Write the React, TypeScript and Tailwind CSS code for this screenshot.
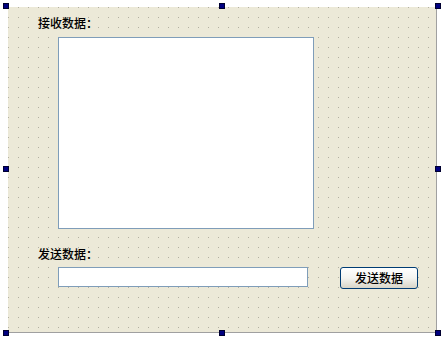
import React from 'react';

// selection handles around the form in the designer
const handles = [
  'left-[3px] top-[3px]',
  'left-[219px] top-[3px]',
  'left-[435px] top-[3px]',
  'left-[3px] top-[166px]',
  'left-[435px] top-[166px]',
  'left-[3px] top-[330px]',
  'left-[219px] top-[330px]',
  'left-[435px] top-[330px]',
];

// designer grid: one pixel dot every 10px
const DotGrid = () => (
  <svg className="absolute inset-0 w-full h-full" aria-hidden="true">
    <defs>
      <pattern id="grid" width="10" height="10" patternUnits="userSpaceOnUse">
        <rect x="0" y="0" width="1" height="1" fill="#b3b0a2" />
      </pattern>
    </defs>
    <rect width="100%" height="100%" fill="url(#grid)" />
  </svg>
);

export default function App() {
  return (
    <div className="relative w-[443px] h-[340px] bg-white overflow-hidden font-['Noto_Sans_CJK_SC','Noto_Sans',sans-serif] text-[12px] text-black">
      <div className="absolute left-[8px] top-[7px] w-[429px] h-[326px] pl-[30px] pt-[9px] border-r border-b border-[#a0a0a0] bg-[#ece9d8]">
        <DotGrid />
        <div className="relative">
          <div className="h-[14px] leading-[14px] font-medium">接收数据：</div>
          <div className="ml-[20px] mt-[7px] w-[256px] h-[192px] bg-white border border-[#7f9db9]" />
          <div className="mt-[18px] h-[14px] leading-[14px] font-medium">发送数据：</div>
          <div className="mt-[6px] flex items-start">
            <div className="ml-[20px] w-[250px] h-[20px] bg-white border border-[#7f9db9]" />
            <button className="ml-[32px] w-[78px] h-[22px] rounded-[3px] border border-[#003c74] bg-gradient-to-b from-white via-[#f4f4f0] to-[#d8d5c8] text-[12px] leading-[20px] font-medium text-black">
              发送数据
            </button>
          </div>
        </div>
      </div>
      {handles.map((h) => (
        <div key={h} className={`absolute ${h} w-[6px] h-[6px] bg-[#000080] border border-[#000030]`} />
      ))}
    </div>
  );
}
